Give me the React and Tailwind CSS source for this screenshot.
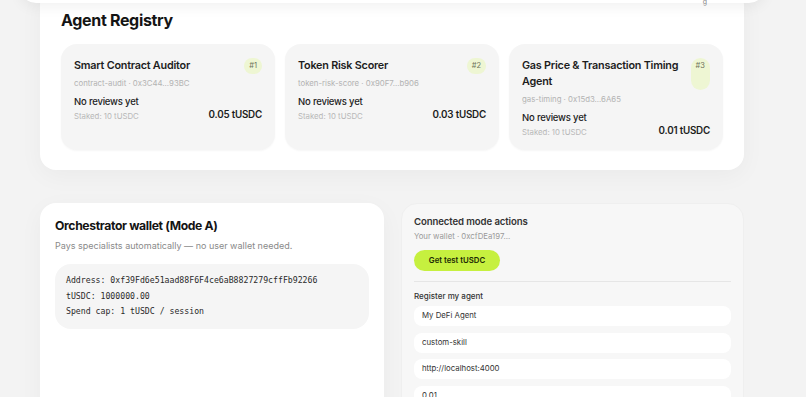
import React from "react";

const agents = [
  {
    id: 1,
    name: "Smart Contract Auditor",
    meta: "contract-audit · 0x3C44...93BC",
    price: "0.05 tUSDC",
  },
  {
    id: 2,
    name: "Token Risk Scorer",
    meta: "token-risk-score · 0x90F7...b906",
    price: "0.03 tUSDC",
  },
  {
    id: 3,
    name: "Gas Price & Transaction Timing Agent",
    meta: "gas-timing · 0x15d3...6A65",
    price: "0.01 tUSDC",
  },
];

const fields = ["My DeFi Agent", "custom-skill", "http://localhost:4000", "0.01"];

function AgentCard({ agent }) {
  return (
    <div className="bg-[#f5f5f5] rounded-[16px] px-[13px] pt-[14px] pb-[12px] flex flex-col shadow-[0_1px_2px_rgba(0,0,0,0.04)]">
      <div className="flex gap-[8px]">
        <h3 className="flex-1 text-[10.8px] leading-[16px] font-semibold tracking-[-0.02em] text-[#1d1d1d]">
          {agent.name}
        </h3>
        <span className="bg-[#eef6d3] text-[#6f745c] text-[7.5px] leading-[16px] px-[5px] rounded-full">
          #{agent.id}
        </span>
      </div>
      <p className="mt-[3px] text-[7.8px] leading-[12px] text-[#b3b3b3]">{agent.meta}</p>
      <div className="mt-[6px] flex items-end justify-between">
        <div>
          <p className="text-[9.5px] leading-[14px] font-medium tracking-[-0.02em] text-[#222]">No reviews yet</p>
          <p className="mt-[1px] text-[7.8px] leading-[12px] text-[#b8b8b8]">Staked: 10 tUSDC</p>
        </div>
        <p className="text-[9.8px] leading-[14px] font-semibold tracking-[-0.02em] text-[#1d1d1d]">{agent.price}</p>
      </div>
    </div>
  );
}

export default function App() {
  return (
    <div className="relative h-[397px] overflow-hidden bg-[#f3f3f3] font-['Inter','Noto_Sans',sans-serif]">
      {/* sticky header, mostly scrolled off */}
      <div className="absolute left-[20px] top-[-40px] w-[745px] h-[43px] bg-white rounded-b-[16px] shadow-[0_4px_14px_rgba(0,0,0,0.06)] z-10">
        <span className="absolute right-[58px] bottom-[-3px] text-[7px] leading-[8px] text-[#888]">g</span>
      </div>

      <div className="ml-[40px] w-[704px] -mt-[11px]">
        <section className="bg-white rounded-[16px] px-[21px] pt-[20px] pb-[20px] shadow-[0_6px_24px_rgba(0,0,0,0.04)]">
          <h2 className="text-[16px] leading-[22px] font-bold tracking-[-0.02em] text-[#141414]">Agent Registry</h2>
          <div className="mt-[13px] grid grid-cols-3 gap-[10px]">
            {agents.map((a) => (
              <AgentCard key={a.id} agent={a} />
            ))}
          </div>
        </section>

        <div className="mt-[33px] grid grid-cols-[344px_343px] gap-[17px]">
          <section className="bg-white rounded-[16px] px-[15px] pt-[13px] h-[260px] shadow-[0_6px_24px_rgba(0,0,0,0.04)]">
            <h2 className="text-[12.2px] leading-[20px] font-bold tracking-[-0.03em] text-[#141414]">
              Orchestrator wallet (Mode A)
            </h2>
            <p className="mt-[3px] text-[9px] leading-[14px] text-[#8a8a8a]">
              Pays specialists automatically — no user wallet needed.
            </p>
            <div className="mt-[11px] bg-[#f5f5f5] rounded-[16px] px-[11px] py-[9px] font-['DejaVu_Sans_Mono',monospace] text-[8.2px] leading-[15.5px] text-[#2a2a2a]">
              <div>Address: 0xf39Fd6e51aad88F6F4ce6aB8827279cffFb92266</div>
              <div>tUSDC: 1000000.00</div>
              <div>Spend cap: 1 tUSDC / session</div>
            </div>
          </section>

          <section className="bg-[#f7f7f7] border border-[#efefef] rounded-[16px] px-[12px] pt-[11px] h-[260px]">
            <h3 className="text-[9.6px] leading-[14px] font-semibold tracking-[-0.01em] text-[#333]">Connected mode actions</h3>
            <p className="mt-[1px] text-[7.8px] leading-[12px] text-[#9a9a9a]">Your wallet · 0xcfDEa197...</p>
            <button className="block mt-[8px] h-[21px] w-[86px] rounded-full bg-[#c6f03f] text-[7.8px] font-semibold text-[#1d2a05]">
              Get test tUSDC
            </button>
            <div className="mt-[10px] border-t border-[#e6e6e6]" />
            <p className="mt-[8px] text-[8px] leading-[12px] font-medium text-[#333]">Register my agent</p>
            <div className="mt-[4px] flex flex-col gap-[6.5px]">
              {fields.map((f) => (
                <div
                  key={f}
                  className="h-[20px] bg-white rounded-[8px] px-[8px] flex items-center text-[7.8px] text-[#333]"
                >
                  {f}
                </div>
              ))}
            </div>
          </section>
        </div>
      </div>
    </div>
  );
}
